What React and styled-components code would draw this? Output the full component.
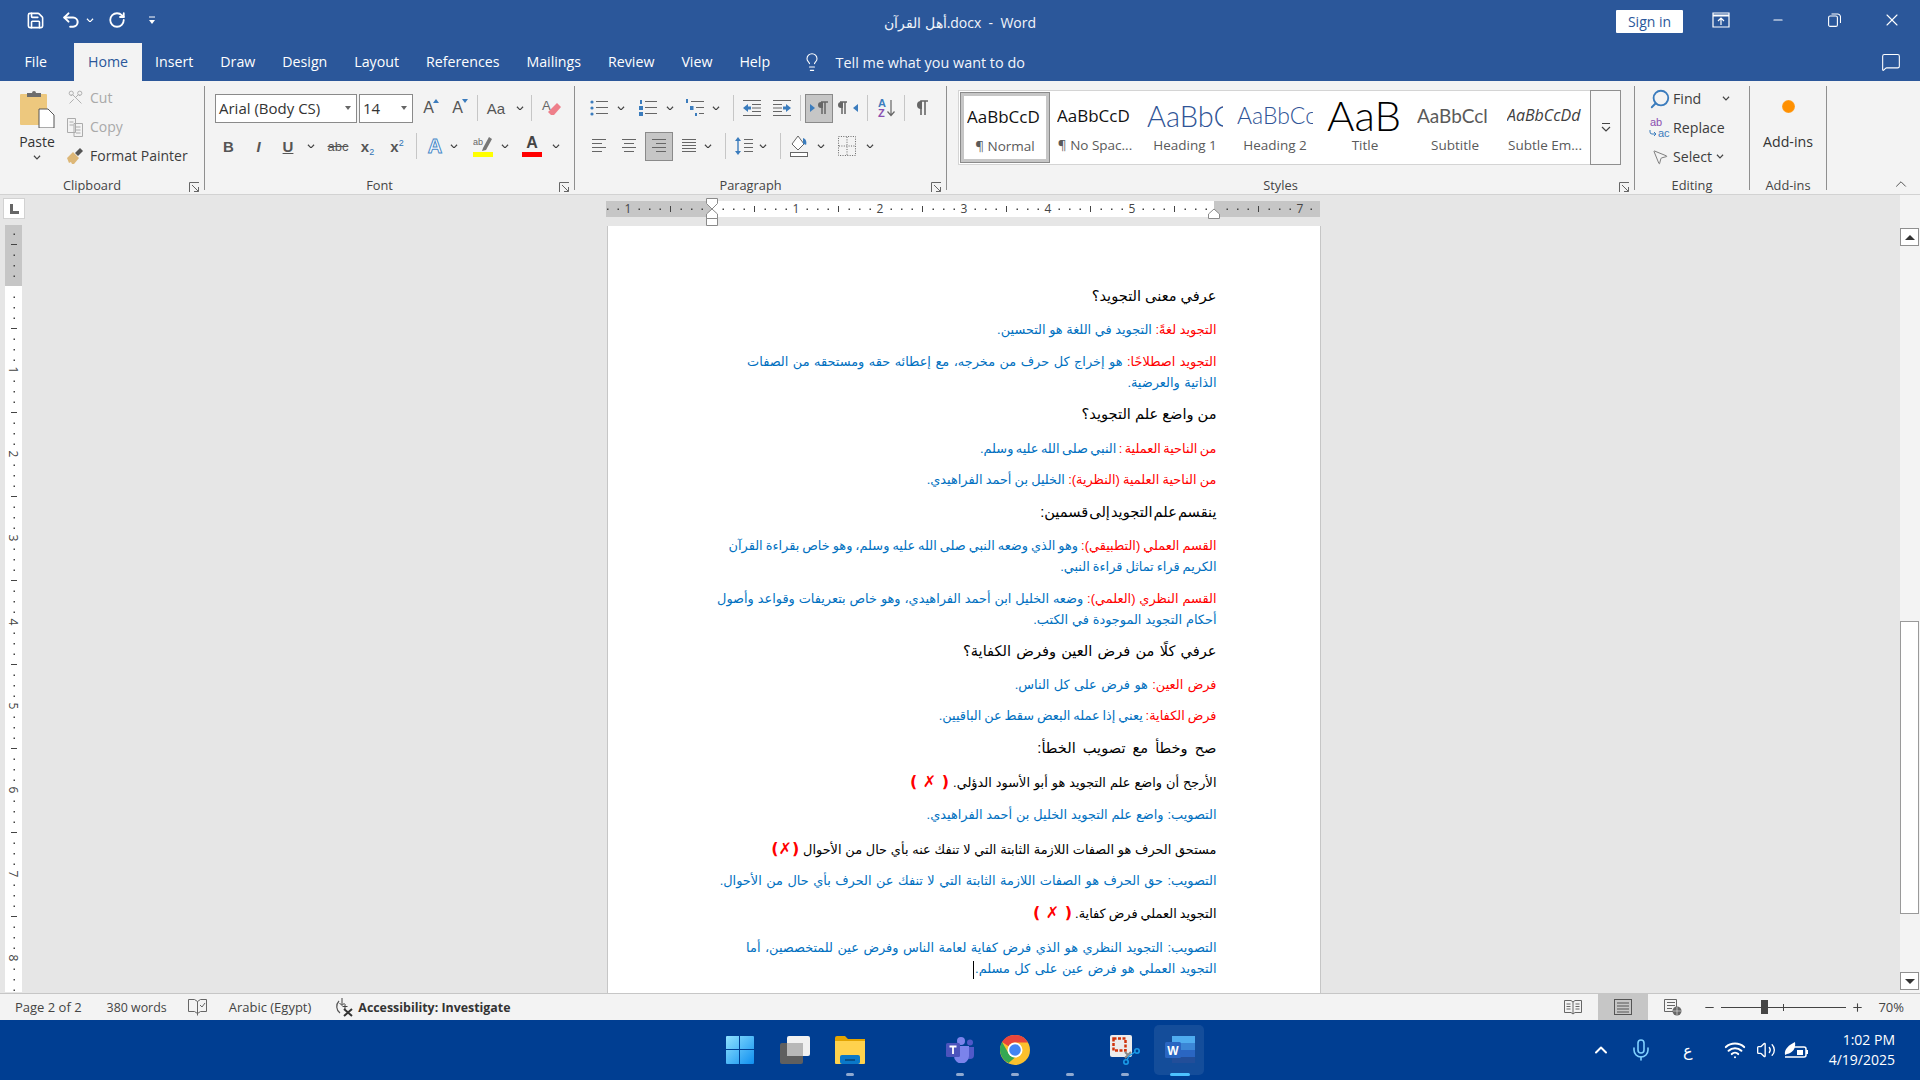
import React from "react";
import styled, { createGlobalStyle } from "styled-components";
import { Save, Undo2, RotateCw, Scissors, Search, MousePointer2, Lightbulb, MessageSquare, X, Minus, Plus, ChevronUp, Mic, Wifi, Volume2 } from "lucide-react";

const Global = createGlobalStyle`
  html, body { margin: 0; padding: 0; width: 1920px; height: 1080px; overflow: hidden; }
  * { box-sizing: border-box; }
  #root { width: 1920px; height: 1080px; }
`;
const UI = `"Open Sans", "Noto Sans", sans-serif`;
const Shell = styled.div`
  width: 1920px; height: 1080px; display: flex; flex-direction: column;
  font-family: ${UI}; font-size: 12.5px; color: #444; background: #e6e6e6; overflow: hidden;
`;

/* ---------- title bar ---------- */
const TitleBar = styled.header`
  height: 43px; background: #2b579a; color: #fff;
  display: grid; grid-template-columns: 1fr auto 1fr; align-items: start;
`;
const Qat = styled.div` display: flex; align-items: center; height: 40px; padding-left: 25px; `;
const QatBtn = styled.span` display: flex; align-items: center; justify-content: center; width: ${p => p.$w}px; margin-left: ${p => p.$ml || 0}px; `;
const DocTitle = styled.div` font-size: 14px; line-height: 46px; direction: ltr; white-space: pre; color: #f2f5fa; `;
const WinControls = styled.div` display: flex; justify-content: flex-end; align-items: center; height: 40px; `;
const SignIn = styled.button`
  width: 67px; height: 23px; margin: 3px 9px 0 0; border: 0; border-radius: 1px; background: #fff; color: #2b579a;
  font: 14px ${UI}; padding: 0;
`;
const WinBtn = styled.span` width: 57px; display: flex; justify-content: center; align-items: center; `;

/* ---------- tabs ---------- */
const TabRow = styled.nav` height: 38px; background: #2b579a; display: flex; padding-left: 11px; align-items: stretch; color: #fff; position: relative; `;
const Tab = styled.div`
  padding: 0 13.5px; font-size: 14.2px; line-height: 38px; white-space: nowrap;
  margin-right: ${p => p.$mr || 0}px;
  background: ${p => (p.$active ? "#f3f3f3" : "transparent")};
  color: ${p => (p.$active ? "#2b579a" : "#fff")};
`;
const TellMe = styled.div` display: flex; align-items: center; margin-left: 18px; gap: 14px; font-size: 14.4px; color: #f2f5fa; `;
const CommentBtn = styled.span` margin-left: auto; margin-right: 19px; display: flex; align-items: center; `;

/* ---------- ribbon ---------- */
const Ribbon = styled.section` height: 114px; background: #f3f3f3; border-bottom: 1px solid #d2d2d2; display: flex; padding-top: 5px; position: relative; `;
const Group = styled.div` width: ${p => p.$w}px; height: 104px; border-right: 1px solid #8f8f8f; position: relative; flex: none; `;
const GroupBody = styled.div` height: 90px; padding-left: ${p => p.$pl || 0}px; padding-top: ${p => p.$pt ?? 7}px; `;
const GroupLabel = styled.div` text-align: center; font-size: 12.8px; line-height: 18px; color: #444; padding-right: ${p => p.$pr || 0}px; white-space: nowrap; `;
const Launcher = styled.span` position: absolute; right: 4px; bottom: -1px; width: 11px; height: 11px; display: block; `;
const Rows = styled.div` display: flex; flex-direction: column; gap: 8px; `;
const Row = styled.div` display: flex; align-items: center; height: 30px; `;
const Tool = styled.span`
  display: flex; align-items: center; justify-content: center; flex: none; height: 29px;
  width: ${p => p.$w || 28}px; margin-left: ${p => p.$ml || 0}px; color: #555;
  ${p => p.$on && "background: #c6c6c6; border: 1px solid #8a8a8a;"}
`;
const ChevBox = styled.span` display: flex; align-items: center; justify-content: center; flex: none; width: ${p => p.$w || 10}px; margin-left: ${p => p.$ml || 0}px; `;
const VSep = styled.span` width: 1px; height: ${p => p.$h || 26}px; background: #c6c6c6; flex: none; margin-left: ${p => p.$ml || 0}px; `;
const Combo = styled.div`
  width: ${p => p.$w}px; height: 29px; margin-left: ${p => p.$ml || 0}px; background: #fff; border: 1px solid #8a8a8a;
  display: flex; align-items: center; justify-content: space-between; padding: 0 5px 0 3px;
  font-size: 15px; color: #333; flex: none; white-space: nowrap;
`;
const DownTri = styled.span` width: 0; height: 0; border-left: 3.5px solid transparent; border-right: 3.5px solid transparent; border-top: 4px solid #666; `;

const ClipLayout = styled.div` display: flex; padding-left: 18px; `;
const PasteCol = styled.div` width: 38px; display: flex; flex-direction: column; align-items: center; line-height: 17px; color: #333; font-size: 14px; gap: 5px; `;
const ClipList = styled.div` display: flex; flex-direction: column; margin-left: 10px; margin-top: -7px; `;
const ClipItem = styled.div`
  display: flex; align-items: center; gap: 6px; height: 29px; font-size: 14px; white-space: nowrap;
  color: ${p => (p.$dis ? "#a9a9a9" : "#3d3d3d")};
`;
const ClipIcon = styled.span` width: 18px; display: flex; justify-content: center; flex: none; `;

const Glyph = styled.span`
  font-family: "Liberation Sans", sans-serif; font-size: ${p => p.$s || 15}px; font-weight: ${p => p.$b ? 700 : 400};
  font-style: ${p => p.$i ? "italic" : "normal"}; text-decoration: ${p => p.$d || "none"}; color: ${p => p.$c || "#555"};
  line-height: 1; position: relative; display: inline-block;
`;
const Sub = styled.sub` font-size: 9px; color: #2f74b5; vertical-align: -3px; line-height: 0; font-weight: 400; `;
const Sup = styled.sup` font-size: 9px; color: #2f74b5; vertical-align: 6px; line-height: 0; font-weight: 400; `;
const OutlineA = styled.span`
  font-family: "Liberation Sans", sans-serif; font-size: 20px; font-weight: 700; color: #fff; -webkit-text-stroke: 1px #4a8ac9; line-height: 1;
`;
const BarGlyph = styled.span` display: flex; flex-direction: column; align-items: center; width: 20px; `;
const ColorBar = styled.span` display: block; width: 20px; height: 5px; background: ${p => p.$c}; margin-top: 1px; `;

const Gallery = styled.div` margin-left: 11px; margin-top: 2px; width: 663px; height: 75px; display: flex; background: #fff; border: 1px solid #d4d4d4; padding: 1px; `;
const StyleItem = styled.div`
  width: 90px; flex: none; height: 71px; overflow: hidden; display: flex; flex-direction: column; align-items: center;
  ${p => p.$on ? "border: 1px solid #8a8a8a; box-shadow: inset 0 0 0 3px #c6c6c6;" : ""}
  padding: 3px 4px 0;
`;
const StylePreview = styled.div`
  height: 40px; width: 76px; flex: none; overflow: hidden; display: flex; align-items: center; justify-content: flex-start; white-space: nowrap;
  font-family: ${p => p.$f || `"Lato", sans-serif`}; font-size: ${p => p.$s}px; color: ${p => p.$c || "#111"};
  font-weight: ${p => p.$fw || 400}; font-style: ${p => p.$i ? "italic" : "normal"};
`;
const StyleName = styled.div` font-size: 13.5px; color: #5a5a5a; line-height: 18px; margin-top: 1px; white-space: nowrap; `;
const GalleryMore = styled.div` flex: none; width: 31px; margin: -2px -2px -2px auto; border: 1px solid #8f8f8f; background: #f7f7f7; display: flex; align-items: center; justify-content: center; `;
const EditList = styled.div` display: flex; flex-direction: column; padding-left: 12px; margin-top: -9px; `;
const EditItem = styled.div` display: flex; align-items: center; height: 29px; font-size: 14.2px; color: #3d3d3d; white-space: nowrap; `;
const EditIcon = styled.span` width: 26px; flex: none; display: flex; justify-content: center; `;
const AddIns = styled.div` display: flex; flex-direction: column; align-items: center; font-size: 14.2px; color: #333; padding-top: 7px; gap: 19px; `;
const Dot = styled.span` width: 13px; height: 13px; border-radius: 50%; background: radial-gradient(circle, #ff9000 55%, #ffc680 100%); display: block; `;
const Collapse = styled.span` margin-left: auto; margin-right: 10px; align-self: flex-end; margin-bottom: 1px; display: flex; `;

/* ---------- document ---------- */
const DocArea = styled.main` flex: 1; min-height: 0; display: grid; grid-template-columns: 27px 1fr 20px; background: #e6e6e6; `;
const LeftRail = styled.div` display: flex; flex-direction: column; align-items: flex-start; padding: 3px 0 0 5px; overflow: hidden; `;
const TabSelector = styled.div` width: 22px; height: 21px; margin-left: -2px; margin-bottom: 6px; background: #fff; border: 1px solid #d2d2d2; display: flex; align-items: center; justify-content: center; flex: none; `;
const DocCol = styled.div` display: flex; flex-direction: column; align-items: center; padding-top: 6px; min-width: 0; overflow: hidden; `;
const RulerSvg = styled.svg` display: block; flex: none; overflow: visible; margin-left: ${p => p.$ml || 0}px; `;
const Page = styled.article`
  width: 714px; flex: 1; margin-top: 9px; background: #fff; border: 1px solid #c6c6c6; border-width: 0 1px; padding: 58px 103px 0 0; overflow: hidden; direction: rtl;
  font-family: "Liberation Sans", "DejaVu Sans", sans-serif;
`;
const Para = styled.p`
  margin: ${p => p.$top}px 0 0; white-space: nowrap; text-align: right; word-spacing: ${p => p.$ws || 0}px;
  font-size: ${p => (p.$h ? 14.6 : 12.9)}px; line-height: ${p => (p.$h ? 24 : 21)}px; color: ${p => (p.$h ? "#000" : "#0070c0")};
`;
const Red = styled.span` color: #ff0000; `;
const Blk = styled.span` color: #000; `;
const Mark = styled.b` color: #ff0000; font-size: 16px; line-height: 20px; font-family: "DejaVu Sans", sans-serif; word-spacing: 0; `;
const Caret = styled.span` display: inline-block; width: 1px; height: 18px; background: #000; vertical-align: middle; margin-right: 1px; `;
const Scroll = styled.div` display: flex; flex-direction: column; background: #f3f3f3; padding: 33px 1px 3px 0; `;
const ScrollBtn = styled.div` height: 18px; background: #fff; border: 1px solid #8f8f8f; display: flex; align-items: center; justify-content: center; flex: none; `;
const Thumb = styled.div` height: 293px; margin: 375px 0 58px; background: #fff; border: 1px solid #9a9a9a; flex: none; `;
const TriUp = styled.span` width:0;height:0;border-left:5px solid transparent;border-right:5px solid transparent;border-bottom:5px solid #333; `;
const TriDown = styled.span` width:0;height:0;border-left:5px solid transparent;border-right:5px solid transparent;border-top:5px solid #333; `;

/* ---------- status ---------- */
const Status = styled.footer` height: 27px; background: #f3f3f3; border-top: 1px solid #c6c6c6; display: flex; align-items: center; font-size: 13px; color: #444; padding-left: 15px; flex: none; `;
const StatusText = styled.span` margin-right: ${p => p.$mr || 0}px; white-space: nowrap; font-weight: ${p => p.$b ? 700 : 400}; font-size: ${p => p.$fs || 13}px; color: ${p => p.$b ? "#333" : "#444"}; `;
const StatusIcon = styled.span` display: flex; align-items: center; margin-right: ${p => p.$mr || 0}px; `;
const ViewBtn = styled.span` width: 50px; height: 26px; display: flex; align-items: center; justify-content: center; background: ${p => p.$on ? "#c6c6c6" : "transparent"}; flex: none; `;
const StatusRight = styled.div` margin-left: auto; display: flex; align-items: center; height: 100%; `;
const ZoomTrack = styled.div` width: 125px; height: 1px; background: #444; position: relative; margin: 0 5px; `;
const ZoomKnob = styled.span` position: absolute; left: 40px; top: -7px; width: 7px; height: 14px; background: #444; `;
const ZoomTick = styled.span` position: absolute; left: 62px; top: -3px; width: 1px; height: 7px; background: #444; `;
const ZoomPct = styled.span` margin: 0 16px 0 14px; `;

/* ---------- taskbar ---------- */
const Taskbar = styled.div` height: 60px; background: #003e92; display: grid; grid-template-columns: 1fr auto 1fr; flex: none; color: #fff; `;
const TaskCenter = styled.div` display: flex; grid-column: 2; `;
const TaskSlot = styled.div` width: 55px; height: 60px; position: relative; display: flex; align-items: center; justify-content: center; `;
const TaskActive = styled.span` position: absolute; left: 1px; top: 5px; width: 50px; height: 50px; background: rgba(255,255,255,.08); border-radius: 5px; `;
const TaskDot = styled.span`
  position: absolute; left: 50%; bottom: 4px; transform: translateX(-50%);
  width: ${p => p.$on ? 20 : 8}px; height: 3px; border-radius: 2px; background: ${p => p.$on ? "#4cc2ff" : "#8fa9d0"};
`;
const Tray = styled.div` display: flex; align-items: center; justify-content: flex-end; padding-right: 25px; height: 60px; `;
const TrayItem = styled.span` display: flex; justify-content: center; align-items: center; width: ${p => p.$w}px; font-size: ${p => p.$fs || 14}px; `;
const Clock = styled.div` text-align: right; font-size: 14px; line-height: 20px; color: #fff; margin-left: 15px; white-space: nowrap; `;

/* ---------- drawings ---------- */
const Chev = ({ c = "#444", s = 8 }) => (
  <svg width={s} height={s * 0.6} viewBox="0 0 8 5"><path d="M.8.8 4 4 7.2.8" fill="none" stroke={c} strokeWidth="1.2" /></svg>
);
const BLUE = "#3b7cbd";
const G = "#666";
const L = ({ y, x1 = 0, x2 = 20, c = G }) => <line x1={x1} x2={x2} y1={y} y2={y} stroke={c} strokeWidth="1" />;
const I20 = ({ children, w = 20, h = 20 }) => <svg width={w} height={h} viewBox={`0 0 ${w} ${h}`}>{children}</svg>;

const Bullets = () => <I20><circle cx="3" cy="4" r="1.6" fill={BLUE}/><circle cx="3" cy="10" r="1.6" fill={BLUE}/><circle cx="3" cy="16" r="1.6" fill={BLUE}/><L y="3.5" x1="7" x2="19"/><L y="9.5" x1="7" x2="19"/><L y="15.5" x1="7" x2="19"/></I20>;
const Numbers = () => <I20><rect x="2" y="2" width="2" height="4" fill={BLUE}/><rect x="1" y="8" width="4" height="4" fill={BLUE}/><rect x="1" y="14" width="4" height="4" fill={BLUE}/><L y="3.5" x1="7" x2="19"/><L y="9.5" x1="7" x2="19"/><L y="15.5" x1="7" x2="19"/></I20>;
const Multi = () => <I20><rect x="1" y="1" width="2" height="4" fill={BLUE}/><rect x="5" y="8" width="3.5" height="4" fill={BLUE}/><rect x="10" y="15" width="2" height="3" fill={BLUE}/><L y="3.5" x1="6" x2="19"/><L y="9.5" x1="11" x2="19"/><L y="15.5" x1="14" x2="19"/></I20>;
const Outdent = ({ flip }) => <svg width="20" height="20" viewBox="0 0 20 20" style={flip ? { transform: "scaleX(-1)" } : undefined}><L y="2.5" x1="1" x2="19"/><L y="17.5" x1="1" x2="19"/><L y="6.5" x1="10" x2="19"/><L y="10" x1="10" x2="19"/><L y="13.5" x1="10" x2="19"/><path d="M1 10l5-4v2.5h3v3H6V14z" fill={BLUE}/></svg>;
const Ltr = () => <I20 w="22"><path d="M2 6l5 4-5 4z" fill={BLUE}/><path d="M13 4h7M14 4v12M17 4v12" stroke={G} strokeWidth="1.5"/><path d="M13 4a3 3 0 0 0 0 6h2V4z" fill={G}/></I20>;
const Rtl = () => <I20 w="22"><path d="M20 6l-5 4 5 4z" fill={BLUE}/><path d="M2 4h7M4 4v12M7 4v12" stroke={G} strokeWidth="1.5"/><path d="M3 4a3 3 0 0 0 0 6h2V4z" fill={G}/></I20>;
const Sort = () => <I20><text x="1" y="9" fontFamily="Liberation Sans" fontSize="11" fontWeight="700" fill={BLUE}>A</text><text x="1" y="19" fontFamily="Liberation Sans" fontSize="11" fontWeight="700" fill="#8a4fb0">Z</text><path d="M14 2v15M10.5 13.5 14 17.5l3.5-4" fill="none" stroke={G} strokeWidth="1.2"/></I20>;
const Pilcrow = () => <I20><path d="M9 17V3h7M13 3v14" stroke={G} strokeWidth="1.6" fill="none"/><path d="M9 3a4 4 0 0 0 0 8h1V3z" fill={G}/></I20>;
const Align = ({ k }) => {
  const seg = k === "j" ? [[3,17],[3,17],[3,17],[3,17],[3,17]] : k === "l" ? [[3,17],[3,13],[3,17],[3,13]] : k === "c" ? [[3,17],[5,15],[3,17],[5,15]] : [[3,17],[7,17],[3,17],[7,17]];
  const gap = k === "j" ? 3 : 4;
  return <I20>{seg.map((s, i) => <L key={i} y={3.5 + i * gap} x1={s[0]} x2={s[1]} />)}</I20>;
};
const LineSpacing = () => <I20><path d="M4 1 1 5h6zM4 19l-3-4h6z" fill={BLUE}/><path d="M4 4v12" stroke={BLUE} strokeWidth="1.4"/><L y="3.5" x1="10" x2="19"/><L y="7.5" x1="10" x2="19"/><L y="11.5" x1="10" x2="19"/><L y="15.5" x1="10" x2="19"/></I20>;
const Shading = () => <I20 w="20" h="24"><path d="M9 2 3 10l6 6 6-6z" fill="#fff" stroke={G}/><path d="M14 4c3 1 4 4 3 7-1-1-2-1-3-1z" fill={BLUE}/><rect x="1.5" y="18.5" width="17" height="4" fill="#fff" stroke={G}/></I20>;
const Borders = () => <I20 w="20" h="22"><rect x="1.5" y="1.5" width="17" height="19" fill="none" stroke={G} strokeDasharray="1 1.4"/><path d="M10 2v18M2 11h16" stroke={G} strokeDasharray="1 1.4"/></I20>;
const PasteIcon = () => (
  <svg width="36" height="38" viewBox="0 0 36 38">
    <rect x="1" y="4" width="27" height="31" rx="1" fill="#edc87e"/>
    <path d="M8 7V3h5a2 2 0 0 1 4 0h5v4z" fill="#6d6d6d"/>
    <path d="M20 19h9l6 6v13H20z" fill="#fff" stroke="#555"/>
  </svg>
);
const CopyIcon = () => <svg width="18" height="20" viewBox="0 0 18 20"><path d="M1.5 1.5h8v14h-8z M8 6.500h8.500v13h-8.500z" fill="#f3f3f3" stroke="#ababab"/><path d="M3.500 5h4M3.500 8h4M10 10h4.500M10 13h4.500M10 16h4.500" stroke="#ababab"/></svg>;
const PainterIcon = () => <svg width="18" height="18" viewBox="0 0 18 18"><path d="M1 11l6-6 6 6-5 6H6l-1-2-2 1z" fill="#ddb777"/><path d="M9 6l5-5 3 3-5 5z" fill="#555"/></svg>;
const EraserIcon = () => <svg width="22" height="22" viewBox="0 0 22 22"><text x="2" y="13" fontFamily="Liberation Sans" fontSize="13" fill="#666">A</text><path d="M11 12l6-6 4 4-7 8h-3l-3-3z" fill="#ee7f8a"/></svg>;
const HighlightIcon = () => <BarGlyph><svg width="20" height="15" viewBox="0 0 20 15"><text x="0" y="9" fontFamily="Liberation Sans" fontSize="9" fill="#666">ab</text><path d="M10 12l6-11 3 2-6 11-4 1z" fill="#777"/></svg><ColorBar $c="#ffff00" /></BarGlyph>;
const Launch = () => <svg width="11" height="11" viewBox="0 0 11 11"><path d="M.5 10V.5H10M3 3l6.500 6.500M5 9.500h4.500V5" fill="none" stroke="#666"/></svg>;
const ReplaceIcon = () => <svg width="22" height="22" viewBox="0 0 22 22"><text x="1" y="9" fontFamily="Liberation Sans" fontSize="11" fill="#8a4fb0">ab</text><text x="9" y="20" fontFamily="Liberation Sans" fontSize="11" fill="#3b7cbd">ac</text><path d="M1 13v2a2 2 0 0 0 2 2h4M5 15l2 2-2 2" fill="none" stroke="#3b7cbd"/></svg>;
const GalleryIcon = () => <svg width="10" height="9" viewBox="0 0 10 9"><path d="M1 .5h8" stroke="#444"/><path d="M1 4l4 4 4-4" fill="none" stroke="#444" strokeWidth="1.200"/></svg>;
const RibbonDisplay = () => <svg width="18" height="16" viewBox="0 0 18 16"><path d="M1 1h16v14H1z" fill="none" stroke="#fff" strokeWidth="1.200"/><path d="M1 3.500h16" stroke="#fff" strokeWidth="2"/><path d="M9 13V6M6 9l3-3 3 3" fill="none" stroke="#fff" strokeWidth="1.200"/></svg>;
const Restore = () => <svg width="13" height="14" viewBox="0 0 13 14"><rect x=".6" y="3" width="8.800" height="10.400" rx="1.500" fill="none" stroke="#fff" strokeWidth="1.100"/><path d="M3.500 1h6a3 3 0 0 1 3 3v6" fill="none" stroke="#fff" strokeWidth="1.100"/></svg>;
const Customize = () => <svg width="8" height="9" viewBox="0 0 8 9"><path d="M1 1h6" stroke="#fff"/><path d="M1 4h6L4 8z" fill="#fff"/></svg>;
const ProofIcon = () => <svg width="19" height="18" viewBox="0 0 19 18"><path d="M.5 1.500h6l3 2 3-2h6v12h-6l-3 2-3-2h-6zM9.500 3.500v14" fill="none" stroke="#666"/><path d="M12 7l2 2 3-4" fill="none" stroke="#666"/></svg>;
const AccessIcon = () => <svg width="20" height="20" viewBox="0 0 20 20"><path d="M4 4a8 8 0 0 0 1 12" fill="none" stroke="#555" strokeWidth="1.200"/><path d="M7 1v7M4.500 6 7 8.500 9.500 6" fill="none" stroke="#444"/><path d="M10 7v5M7.500 9.500h5" stroke="#444"/><path d="M9 12l8 7M17 12l-8 7" stroke="#333" strokeWidth="2"/></svg>;
const ReadIcon = () => <svg width="18" height="16" viewBox="0 0 18 16"><path d="M.5 1.500H7l2 1.500 2-1.500h6.500v12H11l-2 1.500-2-1.500H.5zM9 3v12" fill="none" stroke="#666"/><path d="M2.500 5h4M2.500 7.500h4M2.500 10h4M11.500 5h4M11.500 7.500h4M11.500 10h4" stroke="#666"/></svg>;
const PrintIcon = () => <svg width="18" height="16" viewBox="0 0 18 16"><rect x=".5" y=".5" width="17" height="15" fill="none" stroke="#555"/><path d="M3 4h12M3 7h12M3 10h12M3 13h12" stroke="#555"/></svg>;
const WebIcon = () => <svg width="18" height="17" viewBox="0 0 18 17"><path d="M.5.500h12v12H.5z" fill="none" stroke="#666"/><path d="M3 3.500h8M3 6.500h8M3 9.500h5" stroke="#666"/><circle cx="13" cy="12" r="4.500" fill="#666"/><path d="M9 12h8M13 8v8" stroke="#eee" strokeWidth=".6"/></svg>;

const WinLogo = () => (
  <svg width="30" height="30" viewBox="0 0 30 30">
    <defs><linearGradient id="wl" x1="0" y1="0" x2="1" y2="1"><stop offset="0" stopColor="#8fe2ff"/><stop offset="1" stopColor="#0f8ff0"/></linearGradient></defs>
    <path d="M1 2a1 1 0 0 1 1-1h12v13H1zM15 1h13a1 1 0 0 1 1 1v12H15zM1 15h13v14H2a1 1 0 0 1-1-1zM15 15h14v13a1 1 0 0 1-1 1H15z" fill="url(#wl)"/>
  </svg>
);
const TaskView = () => (
  <svg width="30" height="28" viewBox="0 0 30 28">
    <rect x="0" y="7" width="23" height="21" rx="2" fill="#5f5f5f"/>
    <rect x="7" y="0" width="23" height="20" rx="2" fill="#f1f1f1"/>
    <rect x="7" y="7" width="16" height="13" fill="#b8b8b8"/>
  </svg>
);
const Explorer = () => (
  <svg width="30" height="28" viewBox="0 0 30 28">
    <path d="M0 2a2 2 0 0 1 2-2h8l3 3h17v6H0z" fill="#e3a400"/>
    <path d="M0 5h30v22a1 1 0 0 1-1 1H1a1 1 0 0 1-1-1z" fill="#ffd24d"/>
    <rect x="5" y="19" width="20" height="9" rx="2" fill="#0a78c9"/>
    <path d="M10 24h10" stroke="#053e70" strokeWidth="1.400"/>
  </svg>
);
const Teams = () => (
  <svg width="28" height="26" viewBox="0 0 28 26">
    <circle cx="15" cy="4" r="4" fill="#7b83eb"/><circle cx="24" cy="5.500" r="3" fill="#5059c9"/>
    <path d="M20 10h8v8a4 4 0 0 1-8 0z" fill="#5059c9"/>
    <path d="M8 9h15v10a7 7 0 0 1-15 0z" fill="#7b83eb"/>
    <rect x="0" y="6" width="14" height="14" rx="1.500" fill="#4b53bc"/>
    <path d="M3.500 9.500h7M7 9.500v7.500" stroke="#fff" strokeWidth="1.800"/>
  </svg>
);
const Chrome = () => (
  <svg width="30" height="30" viewBox="0 0 30 30">
    <circle cx="15" cy="15" r="15" fill="#fbc02d"/>
    <path d="M15 0a15 15 0 0 1 13 7.500H15a7.500 7.500 0 0 0-6.500 3.750L2 7a15 15 0 0 1 13-7z" fill="#e8453c"/>
    <path d="M2 7l6.500 11.250A7.500 7.500 0 0 0 15 22.500L8.500 28A15 15 0 0 1 2 7z" fill="#34a853"/>
    <circle cx="15" cy="15" r="7.500" fill="#fff"/><circle cx="15" cy="15" r="5.800" fill="#4285f4"/>
  </svg>
);
const Snip = () => (
  <svg width="30" height="30" viewBox="0 0 30 30">
    <rect x="0" y="0" width="22" height="22" rx="2" fill="#ececec"/>
    <rect x="3.500" y="3.500" width="12" height="12" fill="none" stroke="#d0330b" strokeWidth="2.500" strokeDasharray="3 1.500"/>
    <path d="M15 17l3 3M15 23l6-6" stroke="#888" strokeWidth="2"/>
    <circle cx="27" cy="16" r="2.200" fill="none" stroke="#1a9be8" strokeWidth="1.600"/><circle cx="16" cy="27" r="2.200" fill="none" stroke="#1a9be8" strokeWidth="1.600"/>
    <path d="M19 21l6-4M19 21l-2 4" stroke="#1a9be8" strokeWidth="1.400"/>
  </svg>
);
const WordIcon = () => (
  <svg width="30" height="28" viewBox="0 0 30 28">
    <rect x="7" y="0" width="23" height="7" fill="#41a5ee"/><rect x="7" y="7" width="23" height="7" fill="#2b7cd3"/>
    <rect x="7" y="14" width="23" height="7" fill="#185abd"/><rect x="7" y="21" width="23" height="6" fill="#103f91"/>
    <rect x="0" y="6" width="16" height="16" rx="1.500" fill="#185abd"/>
    <text x="8" y="18.500" textAnchor="middle" fontFamily="Liberation Sans" fontWeight="700" fontSize="12" fill="#fff">W</text>
  </svg>
);
const Battery = () => <svg width="26" height="20" viewBox="0 0 26 20"><path d="M7 7h14a2 2 0 0 1 2 2v6a2 2 0 0 1-2 2H2" fill="none" stroke="#fff" strokeWidth="1.500"/><rect x="23" y="10" width="2" height="4" fill="#fff"/><rect x="14" y="10" width="6" height="5" fill="#fff"/><path d="M2 15C1 9 6 5 12 2c1 6-2 11-8 12z" fill="#fff"/></svg>;

const HRuler = () => {
  const zero = 106, step = 10.5, items = [];
  for (let k = -10; k <= 57; k++) {
    const x = zero + k * step;
    if (k === 0 || k === 48) continue;
    if (k % 8 === 0) items.push(<text key={k} x={x} y="12" textAnchor="middle" fontFamily="Open Sans" fontSize="12" fill="#444">{Math.abs(k / 8)}</text>);
    else if (k % 4 === 0) items.push(<rect key={k} x={x} y="5" width="1" height="6" fill="#444" />);
    else items.push(<rect key={k} x={x} y="7.500" width="1.500" height="1.500" fill="#444" />);
  }
  return (
    <RulerSvg $ml={-2} width="714" height="16" viewBox="0 0 714 16">
      <rect width="714" height="16" fill="#c6c6c6" />
      <rect x="106" width="502" height="16" fill="#fff" />
      {items}
      <path d="M100.500-2.500h11v5L106 8l-5.500-5.500zM100.500 17.500V13L106 8l5.500 5v4.500zM100.500 17.500h11v7h-11z" fill="#fff" stroke="#8a8a8a" />
      <path d="M602.500 17.500V13l5.500-5 5.500 5v4.500z" fill="#fff" stroke="#8a8a8a" />
    </RulerSvg>
  );
};
const VRuler = () => {
  const zero = 61, step = 10.5, items = [];
  for (let k = -5; k <= 70; k++) {
    const y = zero + k * step;
    if (k === 0) continue;
    if (k % 8 === 0) items.push(<text key={k} x="0" y="0" transform={`translate(4 ${y}) rotate(90)`} textAnchor="middle" fontFamily="Open Sans" fontSize="12" fill="#444">{Math.abs(k / 8)}</text>);
    else if (k % 4 === 0) items.push(<rect key={k} x="6" y={y} width="6" height="1" fill="#444" />);
    else items.push(<rect key={k} x="8.500" y={y} width="1.500" height="1.500" fill="#444" />);
  }
  return (
    <RulerSvg width="17" height="767" viewBox="0 0 17 767">
      <rect width="17" height="61" fill="#c6c6c6" />
      <rect y="61" width="17" height="706" fill="#fff" />
      {items}
    </RulerSvg>
  );
};

const Split = ({ w, chev, ml, cml, children }) => (
  <>
    <Tool $w={w} $ml={ml}>{children}</Tool>
    <ChevBox $w={chev || 10} $ml={cml}><Chev /></ChevBox>
  </>
);

const docText = [
  { h: 1, top: 0, lines: ["عرفي معنى التجويد؟"] },
  { top: 10.5, lines: [<><Red>التجويد لغةً: </Red>التجويد في اللغة هو التحسين.</>] },
  { top: 11, ws: 0.9, lines: [<><Red>التجويد اصطلاحًا: </Red>هو إخراج كل حرف من مخرجه، مع إعطائه حقه ومستحقه من الصفات</>, "الذاتية والعرضية."] },
  { h: 1, top: 9.5, lines: ["من واضع علم التجويد؟"] },
  { top: 11.5, ws: -1.2, lines: [<><Red>من الناحية العملية : </Red>النبي صلى الله عليه وسلم.</>] },
  { top: 10, ws: -0.4, lines: [<><Red>من الناحية العلمية (النظرية): </Red>الخليل بن أحمد الفراهيدي.</>] },
  { h: 1, top: 10.5, ws: -3, lines: ["ينقسم علم التجويد إلى قسمين:"] },
  { top: 10.5, ws: -0.6, lines: [<><Red>القسم العملي (التطبيقي): </Red>وهو الذي وضعه النبي صلى الله عليه وسلم، وهو خاص بقراءة القرآن</>, "الكريم قراء تماثل قراءة النبي."] },
  { top: 11, ws: 0.3, lines: [<><Red>القسم النظري (العلمي): </Red>وضعه الخليل ابن أحمد الفراهيدي، وهو خاص بتعريفات وقواعد وأصول</>, "أحكام التجويد الموجودة في الكتب."] },
  { h: 1, top: 9, ws: 1.2, lines: ["عرفي كلًا من فرض العين وفرض الكفاية؟"] },
  { top: 11.5, ws: 0.8, lines: [<><Red>فرض العين: </Red>هو فرض على كل الناس.</>] },
  { top: 10, ws: -0.7, lines: [<><Red>فرض الكفاية: </Red>يعني إذا عمله البعض سقط عن الباقيين.</>] },
  { h: 1, top: 9.5, ws: 3, lines: ["صح وخطأ مع تصويب الخطأ:"] },
  { top: 12.5, ws: 0.4, lines: [<><Blk>الأرجح أن واضع علم التجويد هو أبو الأسود الدؤلي. </Blk><Mark>( ✗ )</Mark></>] },
  { top: 11, ws: 0.3, lines: ["التصويب: واضع علم التجويد الخليل بن أحمد الفراهيدي."] },
  { top: 14, ws: 0.2, lines: [<><Blk>مستحق الحرف هو الصفات اللازمة الثابتة التي لا تنفك عنه بأي حال من الأحوال </Blk><Mark>(✗)</Mark></>] },
  { top: 10, ws: 0.9, lines: ["التصويب: حق الحرف هو الصفات اللازمة الثابتة التي لا تنفك عن الحرف بأي حال من الأحوال."] },
  { top: 12, ws: -0.6, lines: [<><Blk>التجويد العملي فرض كفاية. </Blk><Mark>( ✗ )</Mark></>] },
  { top: 13, ws: 0.9, lines: ["التصويب: التجويد النظري هو الذي فرض كفاية لعامة الناس وفرض عين للمتخصصين، أما", <>التجويد العملي هو فرض عين على كل مسلم.<Caret /></>] },
];

const OS = `"Open Sans", sans-serif`;
const styleItems = [
  { n: "¶ Normal", s: 17, f: OS, on: true, t: "AaBbCcD" },
  { n: "¶ No Spac...", s: 17, f: OS, t: "AaBbCcD" },
  { n: "Heading 1", s: 29, c: "#2f5496", fw: 300, t: "AaBbCc" },
  { n: "Heading 2", s: 23, c: "#2f5496", fw: 300, t: "AaBbCcDd" },
  { n: "Title", s: 42, c: "#000", fw: 300, t: "AaB" },
  { n: "Subtitle", s: 19, c: "#5a5a5a", t: "AaBbCcl" },
  { n: "Subtle Em...", s: 16, c: "#404040", i: true, f: OS, t: "AaBbCcDd" },
];

export default function App() {
  return (
    <Shell>
      <Global />
      <TitleBar>
        <Qat>
          <QatBtn $w={20}><Save size={19} color="#fff" strokeWidth={2} /></QatBtn>
          <QatBtn $w={22} $ml={15}><Undo2 size={20} color="#fff" strokeWidth={2.4} /></QatBtn>
          <QatBtn $w={10} $ml={3}><Chev c="#fff" /></QatBtn>
          <QatBtn $w={20} $ml={12}><RotateCw size={18} color="#fff" strokeWidth={2.4} /></QatBtn>
          <QatBtn $w={10} $ml={20}><Customize /></QatBtn>
        </Qat>
        <DocTitle><bdi>أهل القرآن</bdi>.docx  -  Word</DocTitle>
        <WinControls>
          <SignIn>Sign in</SignIn>
          <WinBtn><RibbonDisplay /></WinBtn>
          <WinBtn><Minus size={14} color="#fff" /></WinBtn>
          <WinBtn><Restore /></WinBtn>
          <WinBtn><X size={20} color="#fff" strokeWidth={1.3} /></WinBtn>
        </WinControls>
      </TitleBar>

      <TabRow>
        <Tab $mr={14}>File</Tab>
        <Tab $active>Home</Tab>
        {["Insert", "Draw", "Design", "Layout", "References", "Mailings", "Review", "View", "Help"].map(t => <Tab key={t}>{t}</Tab>)}
        <TellMe><Lightbulb size={20} color="#fff" strokeWidth={1.3} /><span>Tell me what you want to do</span></TellMe>
        <CommentBtn><MessageSquare size={20} color="#fff" strokeWidth={1.3} /></CommentBtn>
      </TabRow>

      <Ribbon>
        <Group $w={205}>
          <GroupBody $pt={4}>
            <ClipLayout>
              <PasteCol><PasteIcon />Paste<Chev /></PasteCol>
              <ClipList>
                <ClipItem $dis><ClipIcon><Scissors size={17} color="#ababab" strokeWidth={1.3} style={{ transform: "rotate(90deg)" }} /></ClipIcon>Cut</ClipItem>
                <ClipItem $dis><ClipIcon><CopyIcon /></ClipIcon>Copy</ClipItem>
                <ClipItem><ClipIcon><PainterIcon /></ClipIcon>Format Painter</ClipItem>
              </ClipList>
            </ClipLayout>
          </GroupBody>
          <GroupLabel $pr={20}>Clipboard</GroupLabel>
          <Launcher><Launch /></Launcher>
        </Group>

        <Group $w={370}>
          <GroupBody>
            <Rows>
              <Row>
                <Combo $w={142} $ml={10}>Arial (Body CS)<DownTri /></Combo>
                <Combo $w={54} $ml={2}>14<DownTri /></Combo>
                <Tool $w={29} $ml={1}><Glyph $s={16}>A<svg width="6" height="4" style={{ position: "absolute", top: -1, right: -5 }}><path d="M0 4l3-4 3 4z" fill={BLUE} /></svg></Glyph></Tool>
                <Tool $w={29}><Glyph $s={16}>A<svg width="6" height="4" style={{ position: "absolute", top: -1, right: -5 }}><path d="M0 0l3 4 3-4z" fill={BLUE} /></svg></Glyph></Tool>
                <VSep $ml={5} />
                <Tool $w={32} $ml={2}><Glyph $s={15}>Aa</Glyph></Tool>
                <ChevBox $w={16}><Chev /></ChevBox>
                <VSep $ml={3} />
                <Tool $w={30} $ml={4}><EraserIcon /></Tool>
              </Row>
              <Row>
                <Tool $w={27} $ml={10}><Glyph $b>B</Glyph></Tool>
                <Tool $w={33}><Glyph $b $i>I</Glyph></Tool>
                <Tool $w={26}><Glyph $b $d="underline">U</Glyph></Tool>
                <ChevBox $w={20}><Chev /></ChevBox>
                <Tool $w={34}><Glyph $s={13} $d="line-through">abc</Glyph></Tool>
                <Tool $w={25}><Glyph $b>x<Sub>2</Sub></Glyph></Tool>
                <Tool $w={34}><Glyph $b>x<Sup>2</Sup></Glyph></Tool>
                <VSep $ml={2} />
                <Tool $w={28} $ml={4}><OutlineA>A</OutlineA></Tool>
                <ChevBox $w={10}><Chev /></ChevBox>
                <Tool $w={34} $ml={7}><HighlightIcon /></Tool>
                <ChevBox $w={10}><Chev /></ChevBox>
                <Tool $w={38} $ml={3}><BarGlyph><Glyph $s={16} $c="#444" $b>A</Glyph><ColorBar $c="#ff0000" /></BarGlyph></Tool>
                <ChevBox $w={10}><Chev /></ChevBox>
              </Row>
            </Rows>
          </GroupBody>
          <GroupLabel $pr={20}>Font</GroupLabel>
          <Launcher><Launch /></Launcher>
        </Group>

        <Group $w={372}>
          <GroupBody $pl={10}>
            <Rows>
              <Row>
                <Split w={28} chev={16}><Bullets /></Split>
                <Split w={28} chev={16} ml={5}><Numbers /></Split>
                <Split w={28} chev={14} ml={3}><Multi /></Split>
                <VSep $ml={10} />
                <Tool $ml={4}><Outdent /></Tool>
                <Tool $ml={2}><Outdent flip /></Tool>
                <VSep $ml={4} />
                <Tool $ml={4} $on><Ltr /></Tool>
                <Tool $ml={2}><Rtl /></Tool>
                <VSep $ml={4} />
                <Tool $ml={5}><Sort /></Tool>
                <VSep $ml={3} />
                <Tool $ml={3}><Pilcrow /></Tool>
              </Row>
              <Row>
                <Tool><Align k="l" /></Tool>
                <Tool $ml={2}><Align k="c" /></Tool>
                <Tool $ml={2} $on><Align k="r" /></Tool>
                <Split w={28} ml={2}><Align k="j" /></Split>
                <VSep $ml={12} />
                <Split w={28} ml={4}><LineSpacing /></Split>
                <VSep $ml={12} />
                <Tool $ml={4}><Shading /></Tool>
                <ChevBox $ml={3}><Chev /></ChevBox>
                <Tool $ml={7}><Borders /></Tool>
                <ChevBox $ml={4}><Chev /></ChevBox>
              </Row>
            </Rows>
          </GroupBody>
          <GroupLabel $pr={20}>Paragraph</GroupLabel>
          <Launcher><Launch /></Launcher>
        </Group>

        <Group $w={688}>
          <GroupBody $pt={2}>
            <Gallery>
              {styleItems.map(s => (
                <StyleItem key={s.n} $on={s.on}>
                  <StylePreview $s={s.s} $c={s.c} $f={s.f} $fw={s.fw} $i={s.i}>{s.t}</StylePreview>
                  <StyleName>{s.n}</StyleName>
                </StyleItem>
              ))}
              <GalleryMore><GalleryIcon /></GalleryMore>
            </Gallery>
          </GroupBody>
          <GroupLabel $pr={20}>Styles</GroupLabel>
          <Launcher><Launch /></Launcher>
        </Group>

        <Group $w={115}>
          <GroupBody>
            <EditList>
              <EditItem><EditIcon><Search size={22} color={BLUE} strokeWidth={2} style={{ transform: "scaleX(-1)" }} /></EditIcon>Find<ChevBox $w={10} $ml={20}><Chev /></ChevBox></EditItem>
              <EditItem><EditIcon><ReplaceIcon /></EditIcon>Replace</EditItem>
              <EditItem><EditIcon><MousePointer2 size={18} color="#666" strokeWidth={1.1} /></EditIcon>Select<ChevBox $w={10} $ml={3}><Chev /></ChevBox></EditItem>
            </EditList>
          </GroupBody>
          <GroupLabel>Editing</GroupLabel>
        </Group>

        <Group $w={77}>
          <GroupBody>
            <AddIns><Dot />Add-ins</AddIns>
          </GroupBody>
          <GroupLabel>Add-ins</GroupLabel>
        </Group>
        <Collapse><ChevronUp size={18} color="#444" strokeWidth={1.2} /></Collapse>
      </Ribbon>

      <DocArea>
        <LeftRail>
          <TabSelector><svg width="10" height="10" viewBox="0 0 10 10"><path d="M1 0h3v7h6v3H1z" fill="#666" /></svg></TabSelector>
          <VRuler />
        </LeftRail>
        <DocCol>
          <HRuler />
          <Page>
            {docText.map((p, i) => (
              <Para key={i} $h={p.h} $top={p.top} $ws={p.ws}>
                {p.lines.map((l, j) => <React.Fragment key={j}>{j > 0 && <br />}{l}</React.Fragment>)}
              </Para>
            ))}
          </Page>
        </DocCol>
        <Scroll>
          <ScrollBtn><TriUp /></ScrollBtn>
          <Thumb />
          <ScrollBtn><TriDown /></ScrollBtn>
        </Scroll>
      </DocArea>

      <Status>
        <StatusText $mr={25}>Page 2 of 2</StatusText>
        <StatusText $mr={21} $fs={12.4}>380 words</StatusText>
        <StatusIcon $mr={22}><ProofIcon /></StatusIcon>
        <StatusText $mr={24}>Arabic (Egypt)</StatusText>
        <StatusIcon $mr={3}><AccessIcon /></StatusIcon>
        <StatusText $b $fs={12.4}>Accessibility: Investigate</StatusText>
        <StatusRight>
          <ViewBtn><ReadIcon /></ViewBtn>
          <ViewBtn $on><PrintIcon /></ViewBtn>
          <ViewBtn><WebIcon /></ViewBtn>
          <Minus size={13} color="#444" style={{ marginLeft: 5 }} />
          <ZoomTrack><ZoomKnob /><ZoomTick /></ZoomTrack>
          <Plus size={13} color="#444" />
          <ZoomPct>70%</ZoomPct>
        </StatusRight>
      </Status>

      <Taskbar>
        <TaskCenter>
          <TaskSlot><WinLogo /></TaskSlot>
          <TaskSlot><TaskView /></TaskSlot>
          <TaskSlot><Explorer /><TaskDot /></TaskSlot>
          <TaskSlot />
          <TaskSlot><Teams /><TaskDot /></TaskSlot>
          <TaskSlot><Chrome /><TaskDot /></TaskSlot>
          <TaskSlot><TaskDot /></TaskSlot>
          <TaskSlot><Snip /><TaskDot /></TaskSlot>
          <TaskSlot><TaskActive /><WordIcon /><TaskDot $on /></TaskSlot>
        </TaskCenter>
        <Tray>
          <TrayItem $w={40}><ChevronUp size={20} color="#fff" strokeWidth={2.4} /></TrayItem>
          <TrayItem $w={40}><Mic size={24} color="#7fd0ff" strokeWidth={1.6} /></TrayItem>
          <TrayItem $w={55} $fs={16}>ع</TrayItem>
          <TrayItem $w={38}><Wifi size={22} color="#fff" strokeWidth={2.2} /></TrayItem>
          <TrayItem $w={24}><Volume2 size={20} color="#fff" strokeWidth={1.6} /></TrayItem>
          <TrayItem $w={36}><Battery /></TrayItem>
          <Clock>1:02 PM<br />4/19/2025</Clock>
        </Tray>
      </Taskbar>
    </Shell>
  );
}
